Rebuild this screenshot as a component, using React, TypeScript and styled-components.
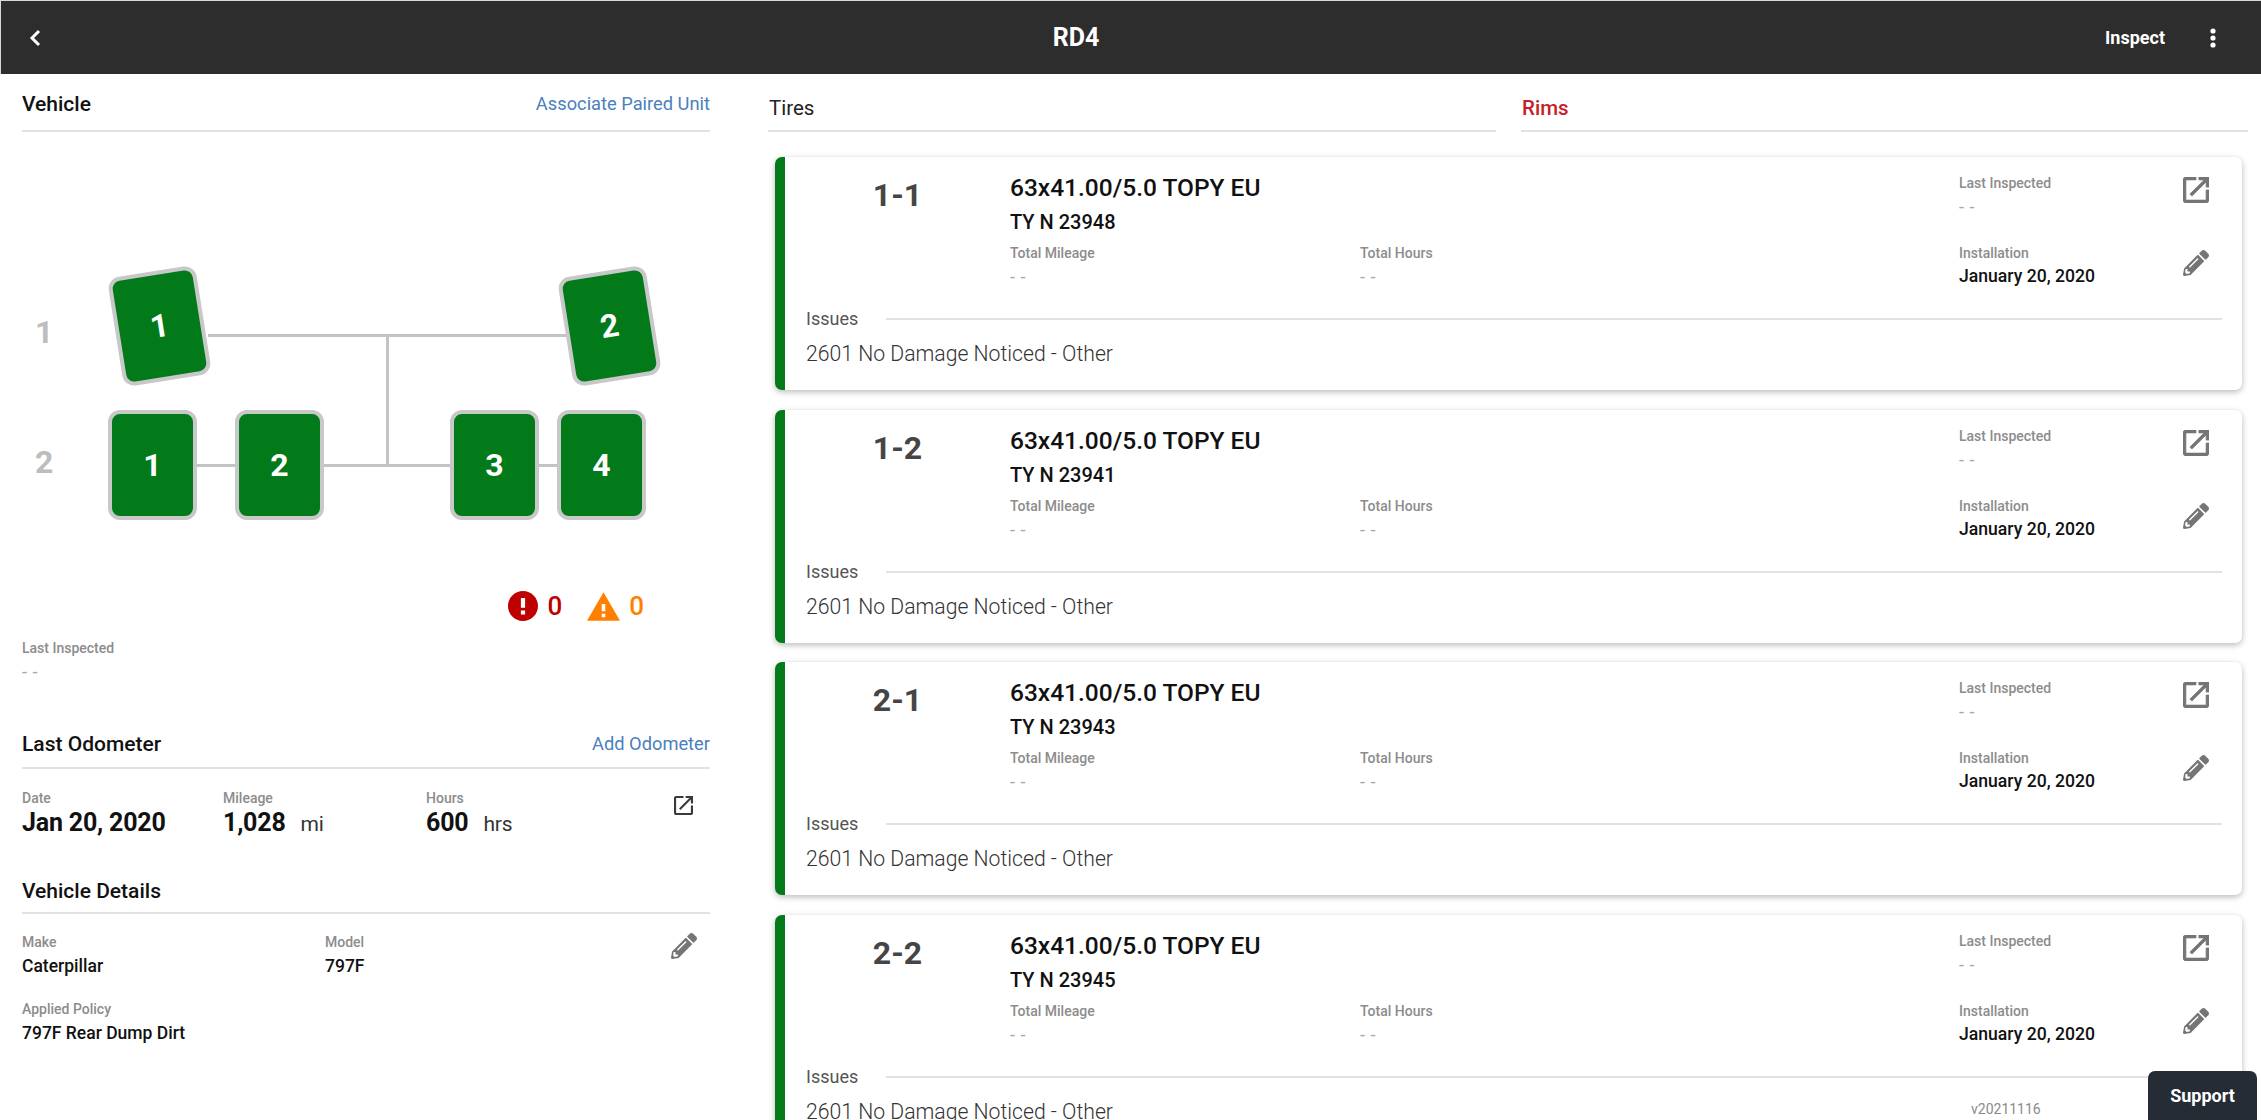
import React from "react";
import styled, { createGlobalStyle } from "styled-components";
import { FaPencilAlt } from "react-icons/fa";

const Global = createGlobalStyle`
  html, body { margin: 0; height: 100%; overflow: hidden; background: #fff; }
  body { font-family: Roboto, "Liberation Sans", sans-serif; color: #111; }
  * { box-sizing: border-box; }
`;

const Page = styled.div`
  position: relative;
  width: 2261px;
  height: 1120px;
  overflow: hidden;
  display: flex;
  flex-direction: column;
`;

const Header = styled.header`
  flex: none;
  height: 74px;
  background: #2d2d2d;
  border-top: 1px solid #d8d8d8;
  border-left: 1px solid #d8d8d8;
  display: grid;
  grid-template-columns: 1018px 60px 1fr;
  align-items: center;
  color: #fff;
  padding-left: 27px;
  padding-right: 45px;
`;

const BackIcon = styled.svg`
  width: 14px;
  height: 18px;
  display: block;
`;

const HeaderTitle = styled.div`
  font-size: 25px;
  font-weight: 700;
  text-align: center;
`;

const HeaderActions = styled.div`
  display: flex;
  justify-content: flex-end;
  align-items: center;
  gap: 45px;
`;

const InspectLabel = styled.div`
  font-size: 18px;
  font-weight: 700;
`;

const DotsIcon = styled.svg`
  width: 6px;
  height: 20px;
  display: block;
`;

const Body = styled.div`
  flex: 1;
  min-height: 0;
  display: grid;
  grid-template-columns: 768px 1fr;
`;

const Left = styled.aside`
  padding: 0 0 0 22px;
  width: 710px;
`;

const Right = styled.main`
  padding-left: 0;
  min-width: 0;
`;

const SectionHead = styled.div<{ $top: number; $bottom: number }>`
  display: flex;
  justify-content: space-between;
  align-items: center;
  padding: ${(p) => p.$top}px 0 ${(p) => p.$bottom}px;
  border-bottom: 2px solid #e2e2e2;
`;

const SectionTitle = styled.div`
  font-size: 21px;
  line-height: 24px;
  font-weight: 500;
  color: #111;
`;

const TextLink = styled.a`
  font-size: 18.3px;
  line-height: 24px;
  color: #4a80bd;
`;

const Diagram = styled.div`
  position: relative;
  height: 451px;
`;

const Wire = styled.div<{ $x: number; $y: number; $w: number; $h: number }>`
  position: absolute;
  left: ${(p) => p.$x}px;
  top: ${(p) => p.$y}px;
  width: ${(p) => p.$w}px;
  height: ${(p) => p.$h}px;
  background: #c4c4c4;
`;

const AxleLabel = styled.div<{ $y: number }>`
  position: absolute;
  left: 13px;
  top: ${(p) => p.$y}px;
  font-size: 32px;
  line-height: 40px;
  font-weight: 700;
  color: #bdbdbd;
`;

const Tire = styled.div<{ $x: number; $y: number; $tilt?: boolean }>`
  position: absolute;
  left: ${(p) => p.$x}px;
  top: ${(p) => p.$y}px;
  width: 89px;
  height: 110px;
  background: #027a1a;
  border: 4px solid #c8c8c8;
  border-radius: 12px;
  display: flex;
  align-items: center;
  justify-content: center;
  color: #fff;
  font-size: 32px;
  font-weight: 700;
  transform: ${(p) => (p.$tilt ? "rotate(-9deg)" : "none")};
`;

const StatusRow = styled.div`
  height: 37px;
  padding: 9px 66px 0 0;
  display: flex;
  justify-content: flex-end;
  align-items: center;
`;

const StatusItem = styled.div<{ $color: string; $gap: number; $ml?: number }>`
  display: flex;
  align-items: center;
  gap: ${(p) => p.$gap}px;
  margin-left: ${(p) => p.$ml ?? 0}px;
  color: ${(p) => p.$color};
  font-size: 26px;
  font-weight: 500;
`;

const StatusIcon = styled.svg<{ $w: number; $h: number }>`
  width: ${(p) => p.$w}px;
  height: ${(p) => p.$h}px;
  display: block;
  fill: currentColor;
`;

const Label = styled.div`
  font-size: 14px;
  line-height: 18px;
  font-weight: 500;
  color: #8c8c8c;
`;

const Dash = styled.div`
  font-size: 18px;
  line-height: 18px;
  word-spacing: 1px;
  color: #a8a8a8;
  margin-top: 6px;
`;

const Inspected = styled.div`
  padding-top: 19px;
  height: 106px;
`;

const OdoGrid = styled.div`
  display: grid;
  grid-template-columns: 201px 203px 248px 1fr;
  padding-top: 20px;
`;

const BigValue = styled.div`
  font-size: 25px;
  line-height: 32px;
  font-weight: 700;
  letter-spacing: -0.2px;
  white-space: nowrap;
  color: #111;
`;

const Unit = styled.span`
  font-size: 21px;
  font-weight: 400;
  color: #333;
  margin-left: 15px;
`;

const SmallOpen = styled.svg`
  width: 19px;
  height: 19px;
  display: block;
  margin-top: 7px;
  fill: #3a3a3a;
`;

const DetailsGrid = styled.div`
  display: grid;
  grid-template-columns: 303px 346px 1fr;
  row-gap: 22px;
  padding-top: 19px;
`;

const DetailValue = styled.div`
  font-size: 17.5px;
  line-height: 24px;
  font-weight: 500;
  color: #111;
  margin-top: 3px;
  white-space: nowrap;
`;

const DetailsBlock = styled.div`
  padding-top: 21px;
`;

const Tabs = styled.div`
  display: grid;
  grid-template-columns: 728px 727px;
  column-gap: 25px;
  padding-bottom: 25px;
`;

const Tab = styled.div<{ $active?: boolean }>`
  padding: 22px 0 10px 1px;
  font-size: 20.5px;
  line-height: 24px;
  font-weight: ${(p) => (p.$active ? 500 : 400)};
  color: ${(p) => (p.$active ? "#c42127" : "#222")};
  border-bottom: 2px solid #e2e2e2;
`;

const CardList = styled.div`
  display: flex;
  flex-direction: column;
  gap: 19.5px;
  margin-left: 7px;
  width: 1467px;
`;

const Card = styled.article`
  flex: none;
  height: 233px;
  background: #fff;
  border-left: 10px solid #027a1a;
  border-radius: 7px;
  box-shadow: 0 2px 6px rgba(0, 0, 0, 0.28);
`;

const CardTop = styled.div`
  display: grid;
  grid-template-columns: 225px 949px 224px 26px;
`;

const Position = styled.div`
  text-align: center;
  padding-top: 19px;
  font-size: 32px;
  line-height: 38px;
  font-weight: 700;
  color: #454545;
`;

const Main = styled.div`
  padding-top: 17px;
`;

const TireName = styled.div`
  font-size: 24.5px;
  line-height: 28px;
  font-weight: 500;
  color: #111;
`;

const TireSerial = styled.div`
  font-size: 20px;
  line-height: 24px;
  font-weight: 500;
  color: #111;
  margin-top: 8px;
`;

const Totals = styled.div`
  display: grid;
  grid-template-columns: 350px 1fr;
  margin-top: 10px;
`;

const Side = styled.div`
  padding-top: 17px;
`;

const SideGap = styled.div`
  height: 28px;
`;

const InstallDate = styled.div`
  font-size: 17.6px;
  line-height: 22px;
  font-weight: 500;
  margin-top: 3px;
  color: #111;
  white-space: nowrap;
`;

const Actions = styled.div`
  padding-top: 20px;
  display: flex;
  flex-direction: column;
  gap: 47px;
  color: #757575;
`;

const OpenIcon = styled.svg`
  width: 26px;
  height: 26px;
  display: block;
  fill: #757575;
  stroke: #757575;
  stroke-width: 0.5;
`;

const Pencil = styled(FaPencilAlt)<{ $size: number; $color: string }>`
  width: ${(p) => p.$size}px;
  height: ${(p) => p.$size}px;
  display: block;
  color: ${(p) => p.$color};
`;

const IssuesHead = styled.div`
  display: flex;
  align-items: center;
  margin: 20px 20px 0 21px;
  font-size: 18px;
  line-height: 24px;
  color: #555;
`;

const IssuesRule = styled.div`
  flex: 1;
  height: 2px;
  margin-left: 28px;
  background: #e2e2e2;
`;

const IssueText = styled.div`
  margin: 9px 0 0 21px;
  font-size: 21.2px;
  line-height: 28px;
  font-weight: 300;
  color: #333;
`;

const Version = styled.div`
  position: absolute;
  left: 1971px;
  top: 1100px;
  font-size: 14px;
  line-height: 18px;
  color: #8a8a8a;
`;

const Support = styled.button`
  position: absolute;
  left: 2148px;
  top: 1071px;
  width: 109px;
  height: 49px;
  border: 0;
  border-radius: 7px 7px 0 0;
  background: #252c36;
  color: #fff;
  font-family: inherit;
  font-size: 18px;
  font-weight: 700;
`;

const openPath =
  "M19 19H5V5h7V3H5c-1.11 0-2 .9-2 2v14c0 1.1.89 2 2 2h14c1.1 0 2-.9 2-2v-7h-2v7zM14 3v2h3.59l-9.83 9.83 1.41 1.41L19 6.41V10h2V3h-7z";

const cards = [
  { pos: "1-1", serial: "TY N 23948" },
  { pos: "1-2", serial: "TY N 23941" },
  { pos: "2-1", serial: "TY N 23943" },
  { pos: "2-2", serial: "TY N 23945" },
];

const tires = [
  { n: 1, x: 93, y: 139, tilt: true },
  { n: 2, x: 543, y: 139, tilt: true },
  { n: 1, x: 86, y: 278 },
  { n: 2, x: 213, y: 278 },
  { n: 3, x: 428, y: 278 },
  { n: 4, x: 535, y: 278 },
];

export default function App() {
  return (
    <Page>
      <Global />
      <Header>
        <BackIcon viewBox="0 0 14 18">
          <path d="M11 2 L4 9 L11 16" fill="none" stroke="#fff" strokeWidth="3" />
        </BackIcon>
        <HeaderTitle>RD4</HeaderTitle>
        <HeaderActions>
          <InspectLabel>Inspect</InspectLabel>
          <DotsIcon viewBox="0 0 6 20">
            <circle cx="3" cy="3" r="2.6" fill="#fff" />
            <circle cx="3" cy="10" r="2.6" fill="#fff" />
            <circle cx="3" cy="17" r="2.6" fill="#fff" />
          </DotsIcon>
        </HeaderActions>
      </Header>
      <Body>
        <Left>
          <SectionHead $top={18} $bottom={14}>
            <SectionTitle>Vehicle</SectionTitle>
            <TextLink>Associate Paired Unit</TextLink>
          </SectionHead>
          <Diagram>
            <Wire $x={186} $y={202} $w={360} $h={3} />
            <Wire $x={364} $y={202} $w={3} $h={131} />
            <Wire $x={175} $y={332} $w={360} $h={3} />
            <AxleLabel $y={180}>1</AxleLabel>
            <AxleLabel $y={310}>2</AxleLabel>
            {tires.map((t, i) => (
              <Tire key={i} $x={t.x} $y={t.y} $tilt={t.tilt}>
                {t.n}
              </Tire>
            ))}
          </Diagram>
          <StatusRow>
            <StatusItem $color="#bf0000" $gap={9}>
              <StatusIcon $w={30} $h={30} viewBox="2 2 20 20">
                <path d="M12 2C6.48 2 2 6.48 2 12s4.48 10 10 10 10-4.48 10-10S17.52 2 12 2zm1.4 15.6h-2.8v-2.6h2.8v2.6zm0-4.4h-2.8V6.6h2.8v6.6z" />
              </StatusIcon>
              0
            </StatusItem>
            <StatusItem $color="#ff8000" $gap={9} $ml={25}>
              <StatusIcon $w={33} $h={29} viewBox="1 2 22 19">
                <path d="M1 21h22L12 2 1 21zm12.2-2.4h-2.4v-2.3h2.4v2.3zm0-3.9h-2.4V9.8h2.4v4.9z" />
              </StatusIcon>
              0
            </StatusItem>
          </StatusRow>
          <Inspected>
            <Label>Last Inspected</Label>
            <Dash>- -</Dash>
          </Inspected>
          <SectionHead $top={6} $bottom={11}>
            <SectionTitle>Last Odometer</SectionTitle>
            <TextLink>Add Odometer</TextLink>
          </SectionHead>
          <OdoGrid>
            <div>
              <Label>Date</Label>
              <BigValue>Jan 20, 2020</BigValue>
            </div>
            <div>
              <Label>Mileage</Label>
              <BigValue>
                1,028<Unit>mi</Unit>
              </BigValue>
            </div>
            <div>
              <Label>Hours</Label>
              <BigValue>
                600<Unit>hrs</Unit>
              </BigValue>
            </div>
            <SmallOpen viewBox="3 3 18 18">
              <path d={openPath} />
            </SmallOpen>
          </OdoGrid>
          <DetailsBlock>
            <SectionHead $top={18} $bottom={9}>
              <SectionTitle>Vehicle Details</SectionTitle>
            </SectionHead>
            <DetailsGrid>
              <div>
                <Label>Make</Label>
                <DetailValue>Caterpillar</DetailValue>
              </div>
              <div>
                <Label>Model</Label>
                <DetailValue>797F</DetailValue>
              </div>
              <Pencil $size={26} $color="#757575" />
              <div>
                <Label>Applied Policy</Label>
                <DetailValue>797F Rear Dump Dirt</DetailValue>
              </div>
            </DetailsGrid>
          </DetailsBlock>
        </Left>
        <Right>
          <Tabs>
            <Tab>Tires</Tab>
            <Tab $active>Rims</Tab>
          </Tabs>
          <CardList>
            {cards.map((c) => (
              <Card key={c.pos}>
                <CardTop>
                  <Position>{c.pos}</Position>
                  <Main>
                    <TireName>63x41.00/5.0 TOPY EU</TireName>
                    <TireSerial>{c.serial}</TireSerial>
                    <Totals>
                      <div>
                        <Label>Total Mileage</Label>
                        <Dash>- -</Dash>
                      </div>
                      <div>
                        <Label>Total Hours</Label>
                        <Dash>- -</Dash>
                      </div>
                    </Totals>
                  </Main>
                  <Side>
                    <Label>Last Inspected</Label>
                    <Dash>- -</Dash>
                    <SideGap />
                    <Label>Installation</Label>
                    <InstallDate>January 20, 2020</InstallDate>
                  </Side>
                  <Actions>
                    <OpenIcon viewBox="3 3 18 18">
                      <path d={openPath} />
                    </OpenIcon>
                    <Pencil $size={26} $color="#757575" />
                  </Actions>
                </CardTop>
                <IssuesHead>
                  Issues
                  <IssuesRule />
                </IssuesHead>
                <IssueText>2601 No Damage Noticed - Other</IssueText>
              </Card>
            ))}
          </CardList>
        </Right>
      </Body>
      <Version>v20211116</Version>
      <Support>Support</Support>
    </Page>
  );
}
